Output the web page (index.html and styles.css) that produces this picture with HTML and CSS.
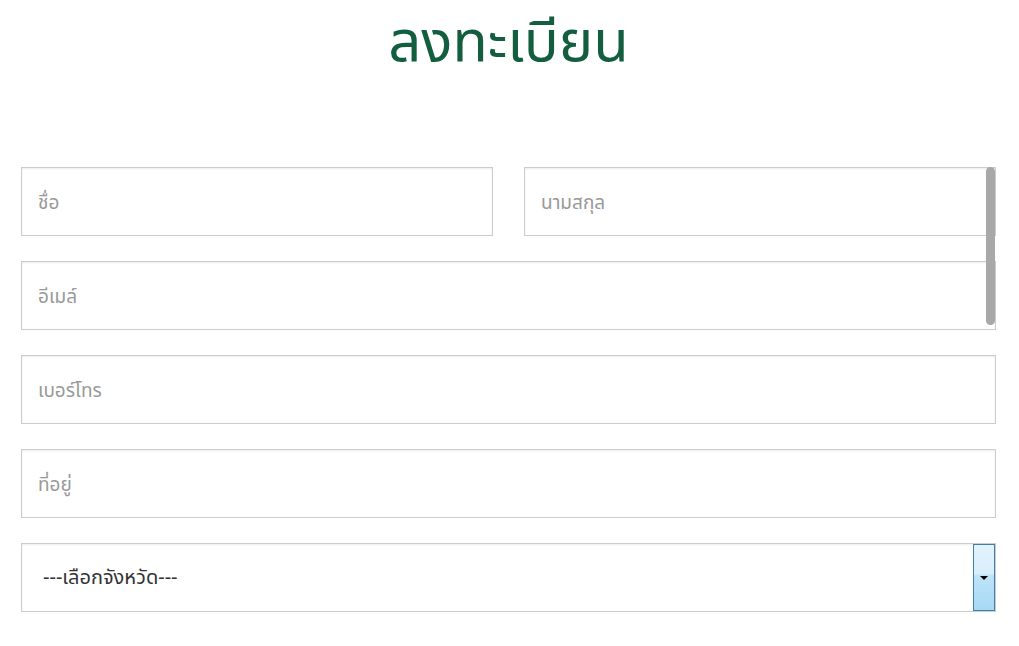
FILE: index.html
```html
<!DOCTYPE html>
<html lang="th">
<head>
    <meta charset="UTF-8">
    <meta name="viewport" content="width=device-width, initial-scale=1.0">
    <title>ลงทะเบียน</title>
    <link rel="stylesheet" href="styles.css">
</head>
<body>
    <h1 class="title">ลงทะเบียน</h1>

    <form class="register">
        <div class="row two">
            <input class="field" type="text" placeholder="ชื่อ">
            <input class="field" type="text" placeholder="นามสกุล">
        </div>
        <div class="row">
            <input class="field" type="email" placeholder="อีเมล์">
        </div>
        <div class="row">
            <input class="field" type="text" placeholder="เบอร์โทร">
        </div>
        <div class="row">
            <input class="field" type="text" placeholder="ที่อยู่">
        </div>
        <div class="row">
            <div class="select">
                <span class="select-text">---เลือกจังหวัด---</span>
                <span class="select-btn"><span class="arrow"></span></span>
            </div>
        </div>
        <div class="scroll-thumb"></div>
    </form>
</body>
</html>
```

FILE: styles.css
```css
body {
    margin: 0;
    padding: 0 23px 0 21px;
    font-family: "Noto Sans", "Noto Sans Thai", "DejaVu Sans", sans-serif;
    background: #fff;
}
.title {
    margin: 0;
    height: 167px;
    box-sizing: border-box;
    text-align: center;
    font-size: 58px;
    font-weight: normal;
    color: #135e3f;
    line-height: 78px;
}
.register {
    position: relative;
    display: flex;
    flex-direction: column;
    gap: 25px;
}
.row { display: flex; }
.row.two { gap: 31px; }
.field, .select {
    flex: 1;
    min-width: 0;
    box-sizing: border-box;
    height: 69px;
    border: 1px solid #ccc;
    box-shadow: inset 0 1px 2px rgba(0,0,0,0.08);
    padding: 0 16px;
    font-family: inherit;
    font-size: 19px;
    color: #333;
    background: #fff;
    outline: none;
}
.field::placeholder { color: #999; }
.select {
    display: flex;
    align-items: center;
    padding: 0 0 0 21px;
    font-size: 20px;
}
.select-text { flex: 1; color: #333; }
.select-btn {
    align-self: stretch;
    width: 20px;
    border: 1px solid #3c7fb1;
    background: linear-gradient(#e3f3fc 0%, #d8eefb 45%, #bde4f8 46%, #a7d9f5 100%);
    display: flex;
    align-items: center;
    justify-content: center;
}
.arrow {
    width: 0;
    height: 0;
    border-left: 4px solid transparent;
    border-right: 4px solid transparent;
    border-top: 4px solid #000;
}
.scroll-thumb {
    position: absolute;
    top: 0;
    right: 1px;
    width: 9px;
    height: 158px;
    border-radius: 5px;
    background: #a8a8a8;
}
```
